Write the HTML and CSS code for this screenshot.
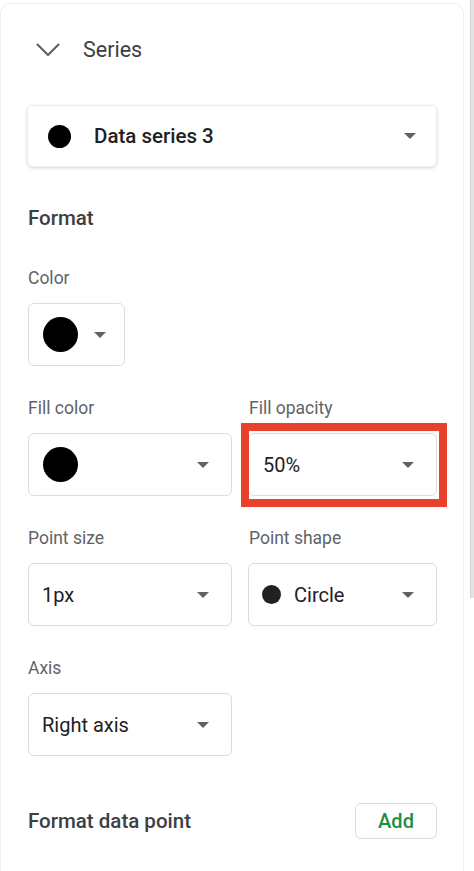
FILE: index.html
```html
<!DOCTYPE html>
<html>
<head>
<meta charset="utf-8">
<link rel="stylesheet" href="styles.css">
</head>
<body>
<div class="page">
  <div class="card">
    <div class="section-head">
      <svg class="chev" width="26" height="16" viewBox="0 0 26 16"><path d="M2 2 L13 13 L24 2" fill="none" stroke="#5f6368" stroke-width="2.2"/></svg>
      <span class="section-title">Series</span>
    </div>

    <div class="series-select">
      <span class="dot dot-lg"></span>
      <span class="series-name">Data series 3</span>
      <span class="arrow"></span>
    </div>

    <div class="heading">Format</div>

    <div class="field">
      <div class="label">Color</div>
      <div class="box box-color">
        <span class="dot dot-xl"></span>
        <span class="arrow"></span>
      </div>
    </div>

    <div class="row">
      <div class="field col-left">
        <div class="label">Fill color</div>
        <div class="box">
          <span class="dot dot-xl"></span>
          <span class="arrow"></span>
        </div>
      </div>
      <div class="field col-right">
        <div class="label">Fill opacity</div>
        <div class="box highlighted">
          <span class="value">50%</span>
          <span class="arrow"></span>
        </div>
      </div>
    </div>

    <div class="row">
      <div class="field col-left">
        <div class="label">Point size</div>
        <div class="box">
          <span class="value">1px</span>
          <span class="arrow"></span>
        </div>
      </div>
      <div class="field col-right">
        <div class="label">Point shape</div>
        <div class="box">
          <span class="dot dot-sm"></span>
          <span class="value">Circle</span>
          <span class="arrow"></span>
        </div>
      </div>
    </div>

    <div class="row">
      <div class="field col-left">
        <div class="label">Axis</div>
        <div class="box">
          <span class="value">Right axis</span>
          <span class="arrow"></span>
        </div>
      </div>
    </div>

    <div class="data-point">
      <span class="heading-inline">Format data point</span>
      <span class="add-btn">Add</span>
    </div>
  </div>
  <div class="scrollbar"></div>
</div>
</body>
</html>
```
FILE: styles.css
```css
* { box-sizing: border-box; }
html, body { margin: 0; padding: 0; background: #fff; }
body {
  font-family: Roboto, "Noto Sans", "Liberation Sans", sans-serif;
  color: #202124;
  width: 474px;
  height: 871px;
  overflow: hidden;
}
.page {
  display: flex;
  align-items: flex-start;
}
.card {
  width: 464px;
  height: 900px;
  margin-top: 3px;
  border: 1px solid #eceef0;
  border-bottom: none;
  border-radius: 10px 10px 0 0;
  padding: 31px 0 0 26px;
  display: flex;
  flex-direction: column;
}
.scrollbar {
  width: 4px;
  height: 598px;
  margin-left: auto;
  background: #e3e3e3;
  border-left: 1px solid #d6d6d6;
}
.section-head {
  display: flex;
  align-items: center;
  height: 28px;
}
.chev { margin-left: 8px; margin-top: 1px; }
.section-title {
  margin-left: 22px;
  font-size: 21.5px;
  color: #3c4043;
}
.series-select {
  margin-top: 42px;
  width: 410px;
  height: 62px;
  border: 1px solid #eceef0;
  border-radius: 6px;
  box-shadow: 0 1px 3px rgba(60,64,67,0.22);
  display: flex;
  align-items: center;
  padding: 0 20px 0 20px;
}
.series-name {
  margin-left: 23px;
  font-size: 20.5px;
  font-weight: 500;
  color: #202124;
  flex: 1;
}
.dot { display: inline-block; border-radius: 50%; background: #000; flex: none; }
.dot-lg { width: 23px; height: 23px; }
.dot-xl { width: 35px; height: 35px; }
.dot-sm { width: 19px; height: 19px; background: #202124; margin-right: 13px; }
.arrow {
  width: 0; height: 0;
  border-left: 6px solid transparent;
  border-right: 6px solid transparent;
  border-top: 6px solid #5f6368;
  flex: none;
  margin-left: auto;
}
.heading {
  margin-top: 37px;
  font-size: 20.5px;
  font-weight: 500;
  line-height: 28px;
  color: #3c4043;
  padding-left: 1px;
}
.field { display: flex; flex-direction: column; }
.label {
  font-size: 17.5px;
  line-height: 24px;
  color: #5f6368;
  padding-left: 1px;
}
.heading + .field { margin-top: 34px; }
.row {
  display: flex;
  gap: 16px;
  margin-top: 30px;
}
.row:last-of-type { margin-top: 32px; }
.box {
  margin-top: 13px;
  margin-left: 1px;
  height: 63px;
  border: 1px solid #dadce0;
  border-radius: 6px;
  display: flex;
  align-items: center;
  padding: 0 22px 0 13px;
  position: relative;
}
.box .dot-xl { margin-left: 1px; }
.box-color { width: 97px; padding-right: 18px; }
.col-left { width: 205px; }
.col-right { width: 189px; }
.col-right .box { margin-left: 0; }
.value {
  font-size: 20px;
  color: #202124;
}
.highlighted .value { margin-left: 1px; }
.highlighted::after {
  content: "";
  position: absolute;
  top: -11px;
  left: -8px;
  right: -11px;
  bottom: -12px;
  border: 8px solid #e8412c;
}
.data-point {
  margin-top: 47px;
  width: 410px;
  display: flex;
  align-items: center;
  justify-content: space-between;
  padding-left: 1px;
}
.heading-inline {
  font-size: 20.5px;
  font-weight: 500;
  color: #3c4043;
}
.add-btn {
  width: 82px;
  height: 36px;
  border: 1px solid #dadce0;
  border-radius: 6px;
  display: flex;
  align-items: center;
  justify-content: center;
  font-size: 20px;
  font-weight: 500;
  color: #1e8e3e;
}
```
